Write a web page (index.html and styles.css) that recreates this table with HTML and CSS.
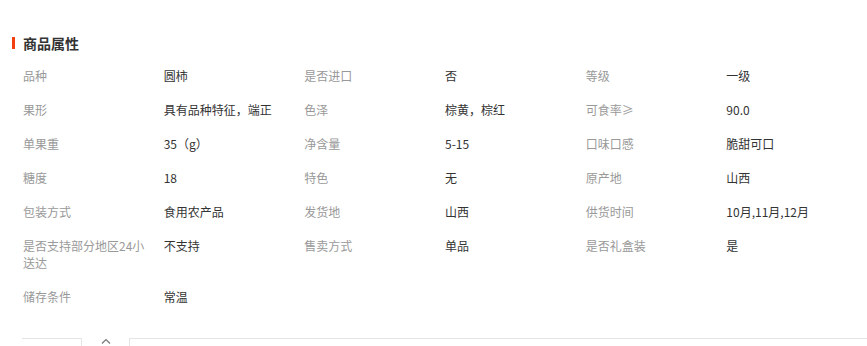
FILE: index.html
```html
<!DOCTYPE html>
<html lang="zh-CN">
<head>
<meta charset="utf-8">
<title>商品属性</title>
<link rel="stylesheet" href="styles.css">
</head>
<body>
<section class="attrs">
  <h2 class="attrs-title">商品属性</h2>
  <dl class="attrs-grid">
    <dt>品种</dt><dd>圆柿</dd>
    <dt>是否进口</dt><dd>否</dd>
    <dt>等级</dt><dd>一级</dd>

    <dt>果形</dt><dd>具有品种特征，端正</dd>
    <dt>色泽</dt><dd>棕黄，棕红</dd>
    <dt>可食率≥</dt><dd>90.0</dd>

    <dt>单果重</dt><dd>35（g）</dd>
    <dt>净含量</dt><dd>5-15</dd>
    <dt>口味口感</dt><dd>脆甜可口</dd>

    <dt>糖度</dt><dd>18</dd>
    <dt>特色</dt><dd>无</dd>
    <dt>原产地</dt><dd>山西</dd>

    <dt>包装方式</dt><dd>食用农产品</dd>
    <dt>发货地</dt><dd>山西</dd>
    <dt>供货时间</dt><dd>10月,11月,12月</dd>

    <dt>是否支持部分地区24小送达</dt><dd>不支持</dd>
    <dt>售卖方式</dt><dd>单品</dd>
    <dt>是否礼盒装</dt><dd>是</dd>

    <dt>储存条件</dt><dd>常温</dd>
  </dl>
  <div class="tabs">
    <div class="tab tab-first"></div>
    <div class="tab tab-active">
      <svg width="10" height="6" viewBox="0 0 10 6" aria-hidden="true"><path d="M1 5.5 L5 1.5 L9 5.5" fill="none" stroke="#777" stroke-width="1.2"/></svg>
    </div>
    <div class="tab tab-rest"></div>
  </div>
</section>
</body>
</html>
```
FILE: styles.css
```css
* { box-sizing: border-box; }
html, body {
  margin: 0;
  padding: 0;
  background: #fff;
  font-family: "Noto Sans CJK SC", "Noto Sans", sans-serif;
}
.attrs {
  padding: 37px 0 0 0;
}
.attrs-title {
  margin: 0 0 0 12px;
  padding-left: 8px;
  border-left: 3px solid #f2400f;
  font-size: 14px;
  line-height: 12px;
  height: 12px;
  font-weight: bold;
  color: #333;
}
.attrs-grid {
  display: grid;
  grid-template-columns: repeat(6, 1fr);
  margin: 18px 0 0 23px;
  padding: 0;
  font-size: 12px;
  line-height: 17px;
}
.attrs-grid dt,
.attrs-grid dd {
  margin: 0 0 17px 0;
  padding-right: 15px;
}
.attrs-grid dt {
  color: #999;
}
.attrs-grid dd {
  color: #333;
}
.tabs {
  display: flex;
  margin: 16px 0 0 22px;
  height: 12px;
}
.tab-first {
  width: 60px;
  border-top: 1px solid #e5e5e5;
  border-right: 1px solid #e5e5e5;
}
.tab-active {
  width: 47px;
  display: flex;
  justify-content: center;
}
.tab-active svg {
  display: block;
}
.tab-rest {
  flex: 1;
  border-top: 1px solid #e5e5e5;
  border-left: 1px solid #e5e5e5;
}
```
